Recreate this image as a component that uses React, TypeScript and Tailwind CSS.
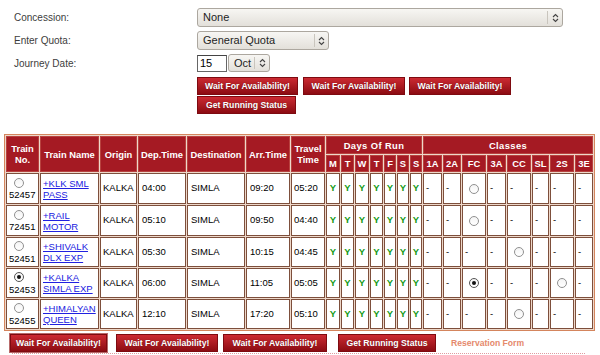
import React from "react";

const F = "font-['Liberation_Sans',Arial,sans-serif]";

function Arrows() {
  return (
    <svg width="7" height="10" viewBox="0 0 7 10" fill="none" stroke="#444" strokeWidth="1.1">
      <path d="M1 4 L3.5 1.5 L6 4" />
      <path d="M1 6 L3.5 8.5 L6 6" />
    </svg>
  );
}

function Sel({ text, className, arrowW }: { text: string; className: string; arrowW: string }) {
  return (
    <div className={"flex items-stretch border border-[#aca79f] rounded-[3px] bg-linear-to-b from-[#f7f6f3] to-[#e3e0da] " + className}>
      <span className="flex-1 flex items-center pl-[5px] text-[11px] text-[#1e1e1e] whitespace-nowrap">{text}</span>
      <span className="w-px my-[2px] bg-[#c9c5bd]" />
      <span className={"flex items-center justify-center " + arrowW}>
        <Arrows />
      </span>
    </div>
  );
}

function Btn({ children, className }: { children: React.ReactNode; className: string }) {
  return (
    <button
      className={
        "h-[18px] flex items-center justify-center text-[8.7px] font-bold text-white whitespace-nowrap leading-none bg-linear-to-b from-[#cc2a32] to-[#8c0b12] border border-[#7e0a10] [text-shadow:0_0_1px_rgba(0,0,0,0.4)] " +
        className
      }
    >
      {children}
    </button>
  );
}

function Radio({ checked }: { checked?: boolean }) {
  return (
    <span
      className={
        "inline-flex items-center justify-center w-[10px] h-[10px] rounded-full border bg-linear-to-b from-[#f4f4f4] to-white " +
        (checked ? "border-[#555]" : "border-[#909090]")
      }
    >
      {checked && <span className="w-[4px] h-[4px] rounded-full bg-[#111]" />}
    </span>
  );
}

const colW = [
  "w-[33px]", "w-[59px]", "w-[37px]", "w-[48px]", "w-[58px]", "w-[44px]", "w-[34px]",
  "w-[14px]", "w-[13px]", "w-[14px]", "w-[13px]", "w-[12px]", "w-[12px]", "w-[12px]",
  "w-[19px]", "w-[18px]", "w-[24px]", "w-[19px]", "w-[24px]", "w-[17px]", "w-[24px]", "w-[18px]",
];

type Row = {
  no: string;
  l1: string;
  l2: string;
  dep: string;
  arr: string;
  tt: string;
  sel?: boolean;
  radios: Record<number, boolean>;
};

const rows: Row[] = [
  { no: "52457", l1: "+KLK SML", l2: "PASS", dep: "04:00", arr: "09:20", tt: "05:20", radios: { 2: false } },
  { no: "72451", l1: "+RAIL", l2: "MOTOR", dep: "05:10", arr: "09:50", tt: "04:40", radios: { 2: false } },
  { no: "52451", l1: "+SHIVALK", l2: "DLX EXP", dep: "05:30", arr: "10:15", tt: "04:45", radios: { 4: false } },
  { no: "52453", l1: "+KALKA", l2: "SIMLA EXP", dep: "06:00", arr: "11:05", tt: "05:05", sel: true, radios: { 2: true, 6: false } },
  { no: "52455", l1: "+HIMALYAN", l2: "QUEEN", dep: "12:10", arr: "17:20", tt: "05:10", radios: { 4: false } },
];

const days = ["M", "T", "W", "T", "F", "S", "S"];
const classes = ["1A", "2A", "FC", "3A", "CC", "SL", "2S", "3E"];

const th = "bg-[#a51a23] border border-[#b8423f] text-white font-bold text-[9.4px] leading-[11px] text-center align-middle p-0";
const tdBase = "bg-white border border-[#7d4f3c] text-[9.5px] align-middle py-0 whitespace-nowrap";
const td = tdBase + " text-black px-[2px]";

export default function App() {
  return (
    <div className={"w-[600px] h-[355px] bg-white overflow-hidden relative " + F}>
      <div className="pt-[8px]">
        <div className="flex items-center h-[19px]">
          <div className="w-[197px] pl-[14px] text-[10px] text-[#3d3d3d]">Concession:</div>
          <Sel text="None" className="w-[366px] h-[19px]" arrowW="w-[14px]" />
        </div>
        <div className="flex items-center h-[19px] mt-[4px]">
          <div className="w-[197px] pl-[14px] text-[10px] text-[#3d3d3d]">Enter Quota:</div>
          <Sel text="General Quota" className="w-[132px] h-[19px]" arrowW="w-[13px]" />
        </div>
        <div className="flex items-center h-[18px] mt-[4px]">
          <div className="w-[197px] pl-[14px] text-[10px] text-[#3d3d3d]">Journey Date:</div>
          <div className="w-[30px] h-[17px] border border-[#666] border-t-[#444] bg-white text-[11px] text-black pl-[2px] flex items-center">15</div>
          <Sel text="Oct" className="ml-[1px] w-[42px] h-[18px]" arrowW="w-[14px]" />
        </div>
        <div className="flex mt-[5px] pl-[197px]">
          <Btn className="w-[101px]">Wait For Availability!</Btn>
          <Btn className="w-[102px] ml-[5px]">Wait For Availability!</Btn>
          <Btn className="w-[102px] ml-[4px]">Wait For Availability!</Btn>
        </div>
        <div className="flex mt-[1px] pl-[197px]">
          <Btn className="w-[99px] h-[17px]">Get Running Status</Btn>
        </div>
      </div>

      <table className="ml-[4px] mt-[20px] w-[591px] table-fixed border-separate border-spacing-[1px] border border-[#d4855d] bg-[#eed8ca]">
        <colgroup>
          {colW.map((c, i) => (
            <col key={i} className={c} />
          ))}
        </colgroup>
        <thead>
          <tr className="h-[18px]">
            <th rowSpan={2} className={th}>Train<br />No.</th>
            <th rowSpan={2} className={th}>Train Name</th>
            <th rowSpan={2} className={th}>Origin</th>
            <th rowSpan={2} className={th}>Dep.Time</th>
            <th rowSpan={2} className={th}>Destination</th>
            <th rowSpan={2} className={th}>Arr.Time</th>
            <th rowSpan={2} className={th}>Travel<br />Time</th>
            <th colSpan={7} className={th + " tracking-[0.4px]"}>Days Of Run</th>
            <th colSpan={8} className={th + " tracking-[0.4px]"}>Classes</th>
          </tr>
          <tr className="h-[17px]">
            {days.map((d, i) => (
              <th key={"d" + i} className={th}>{d}</th>
            ))}
            {classes.map((c) => (
              <th key={c} className={th}>{c}</th>
            ))}
          </tr>
        </thead>
        <tbody>
          {rows.map((r, ri) => (
            <tr key={r.no} className={ri < 2 ? "h-[31px]" : "h-[30px]"}>
              <td className={td + " leading-[11px]"}>
                <div className="pl-[5px] h-[11px] flex items-center">
                  <Radio checked={r.sel} />
                </div>
                <div className="mt-[1px]">{r.no}</div>
              </td>
              <td className={td + " leading-[11px]"}>
                <a className="text-[#2020e0] underline">
                  {r.l1}
                  <br />
                  {r.l2}
                </a>
              </td>
              <td className={td}>KALKA</td>
              <td className={td + " pl-[3px]"}>{r.dep}</td>
              <td className={td + " pl-[3px]"}>SIMLA</td>
              <td className={td + " pl-[3px]"}>{r.arr}</td>
              <td className={td}>{r.tt}</td>
              {days.map((_, i) => (
                <td key={"y" + i} className={tdBase + " text-center font-bold text-[#159a15] px-0"}>Y</td>
              ))}
              {classes.map((c, i) => (
                <td key={c} className={i in r.radios ? tdBase + " text-center px-0" : td}>
                  {i in r.radios ? (
                    <span className="inline-flex align-middle">
                      <Radio checked={r.radios[i]} />
                    </span>
                  ) : (
                    "-"
                  )}
                </td>
              ))}
            </tr>
          ))}
        </tbody>
      </table>

      <div className="flex items-center mt-[3px]">
        <Btn className="ml-[10px] w-[97px] border-[#5a0508] shadow-[0_0_0_1px_#b86a6a]">Wait For Availability!</Btn>
        <Btn className="ml-[9px] w-[102px]">Wait For Availability!</Btn>
        <Btn className="ml-[5px] w-[104px]">Wait For Availability!</Btn>
        <Btn className="ml-[11px] w-[98px]">Get Running Status</Btn>
        <span className="ml-[15px] text-[8.6px] font-bold text-[#e5896c]">Reservation Form</span>
      </div>
      <div className="ml-[12px] w-[573px] mt-[1px] border-b border-dotted border-[#e29aa0]" />
    </div>
  );
}
